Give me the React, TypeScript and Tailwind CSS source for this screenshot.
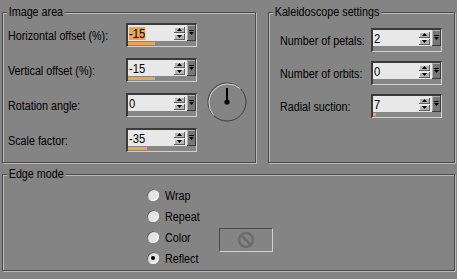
import React from "react";

const FONT = { fontFamily: '"Liberation Sans", Arial, sans-serif' };

function T({ children, className }: { children: React.ReactNode; className?: string }) {
  return (
    <span className={`inline-block origin-left scale-x-[0.86] whitespace-nowrap text-[12.5px] leading-[15px] text-black ${className ?? ""}`}>
      {children}
    </span>
  );
}

function Group({ title, className, children }: { title: string; className?: string; children?: React.ReactNode }) {
  return (
    <div className={`relative border border-[#4c4c4c] shadow-[inset_1px_1px_0_#b8b8b8,1px_1px_0_#b8b8b8] ${className ?? ""}`}>
      <div className="absolute -top-[8px] left-[4px] origin-left scale-x-[0.86] whitespace-nowrap bg-[#848484] px-[2px] text-[12.5px] leading-[15px] text-black">
        {title}
      </div>
      {children}
    </div>
  );
}

function Spinner({ value, selected, progress }: { value: string; selected?: boolean; progress?: number }) {
  return (
    <div className="flex h-[24px] w-[71px] flex-col border-l-2 border-t-2 border-b border-r border-l-[#3a3a3a] border-t-[#3a3a3a] border-b-[#d0d0d0] border-r-[#d0d0d0] bg-[#878787]">
      <div className="flex h-[16px] bg-[#e8e8e8]">
        <div className="flex flex-1 items-center pl-[1px]">
          <span
            className={`inline-block origin-left scale-x-[0.86] text-[13px] leading-[13px] text-black ${selected ? "bg-[#f2a24a]" : ""}`}
          >
            {value}
          </span>
        </div>
        <div className="flex w-[13px] flex-col justify-center gap-[1px] pr-[1px]">
          <div className="flex h-[6px] w-[11px] items-center justify-center border-r border-b border-[#606060] bg-[#b4b4b4] shadow-[inset_1px_1px_0_#eaeaea]">
            <svg width="5" height="3" viewBox="0 0 5 3"><path d="M2.5 0 L5 3 L0 3 Z" fill="#000" /></svg>
          </div>
          <div className="flex h-[6px] w-[11px] items-center justify-center border-r border-b border-[#606060] bg-[#b4b4b4] shadow-[inset_1px_1px_0_#eaeaea]">
            <svg width="5" height="3" viewBox="0 0 5 3"><path d="M0 0 L5 0 L2.5 3 Z" fill="#000" /></svg>
          </div>
        </div>
        <div className="flex w-[9px] flex-col items-center justify-center gap-[1px] border-r border-b border-[#3c3c3c] bg-[#767676] shadow-[inset_1px_1px_0_#b0b0b0]">
          <div className="h-[1px] w-[5px] bg-black" />
          <svg width="5" height="3" viewBox="0 0 5 3"><path d="M0 0 L5 0 L2.5 3 Z" fill="#000" /></svg>
        </div>
      </div>
      <div className="flex h-[5px] items-start pt-[1px]">
        {progress ? <div className="h-[3px] bg-[#f2a24a]" style={{ width: progress }} /> : null}
      </div>
    </div>
  );
}

function Row({ label, labelW, children }: { label: string; labelW: string; children: React.ReactNode }) {
  return (
    <div className="flex h-[24px] items-center">
      <div className={labelW}>
        <T>{label}</T>
      </div>
      {children}
    </div>
  );
}

function Radio({ label, checked }: { label: string; checked?: boolean }) {
  return (
    <div className="flex h-[21px] items-center">
      <div className="flex h-[12px] w-[12px] items-center justify-center rounded-full bg-[#e4e4e4] shadow-[inset_1px_1px_0_#5a5a5a,inset_-1px_-1px_0_#f8f8f8]">
        {checked ? <div className="h-[4px] w-[4px] rounded-full bg-black" /> : null}
      </div>
      <div className="ml-[6px]">
        <T>{label}</T>
      </div>
    </div>
  );
}

function Dial() {
  return (
    <svg width="42" height="42" viewBox="0 0 42 42">
      <circle cx="21" cy="21" r="19" fill="none" stroke="#3e3e3e" strokeWidth="1" />
      <path d="M7.6 34.4 A19 19 0 0 1 34.4 7.6" fill="none" stroke="#d8d8d8" strokeWidth="1" />
      <line x1="21" y1="21" x2="21" y2="7" stroke="#000" strokeWidth="2" />
      <circle cx="21" cy="21" r="2.6" fill="#000" />
    </svg>
  );
}

export default function App() {
  return (
    <div className="h-[279px] w-[457px] bg-[#848484] pt-[12px] pl-[2px]" style={FONT}>
      <div className="flex">
        <Group title="Image area" className="h-[151px] w-[254px]">
          <div className="flex">
            <div className="flex flex-col gap-[11px] pl-[5px] pt-[10px]">
              <Row label="Horizontal offset (%):" labelW="w-[118px]">
                <Spinner value="-15" selected progress={27} />
              </Row>
              <Row label="Vertical offset (%):" labelW="w-[118px]">
                <Spinner value="-15" progress={27} />
              </Row>
              <Row label="Rotation angle:" labelW="w-[118px]">
                <Spinner value="0" />
              </Row>
              <Row label="Scale factor:" labelW="w-[118px]">
                <Spinner value="-35" progress={19} />
              </Row>
            </div>
            <div className="ml-[9px] mt-[68px]">
              <Dial />
            </div>
          </div>
        </Group>
        <Group title="Kaleidoscope settings" className="ml-[12px] h-[151px] w-[187px]">
          <div className="flex flex-col gap-[9px] pl-[11px] pt-[15px]">
            <Row label="Number of petals:" labelW="w-[91px]">
              <Spinner value="2" />
            </Row>
            <Row label="Number of orbits:" labelW="w-[91px]">
              <Spinner value="0" />
            </Row>
            <Row label="Radial suction:" labelW="w-[91px]">
              <Spinner value="7" progress={3} />
            </Row>
          </div>
        </Group>
      </div>
      <Group title="Edge mode" className="mt-[11px] h-[97px] w-[453px]">
        <div className="flex pl-[144px] pt-[9px]">
          <div className="flex w-[72px] flex-col">
            <Radio label="Wrap" />
            <Radio label="Repeat" />
            <Radio label="Color" />
            <Radio label="Reflect" checked />
          </div>
          <div className="mt-[44px] flex h-[24px] w-[54px] items-center justify-center border border-l-[#4a4a4a] border-t-[#4a4a4a] border-r-[#d0d0d0] border-b-[#d0d0d0]">
            <svg width="18" height="18" viewBox="0 0 18 18">
              <circle cx="9" cy="9" r="7" fill="none" stroke="#6c6c6c" strokeWidth="2.5" />
              <line x1="4" y1="4" x2="14" y2="14" stroke="#6c6c6c" strokeWidth="2.5" />
            </svg>
          </div>
        </div>
      </Group>
    </div>
  );
}
